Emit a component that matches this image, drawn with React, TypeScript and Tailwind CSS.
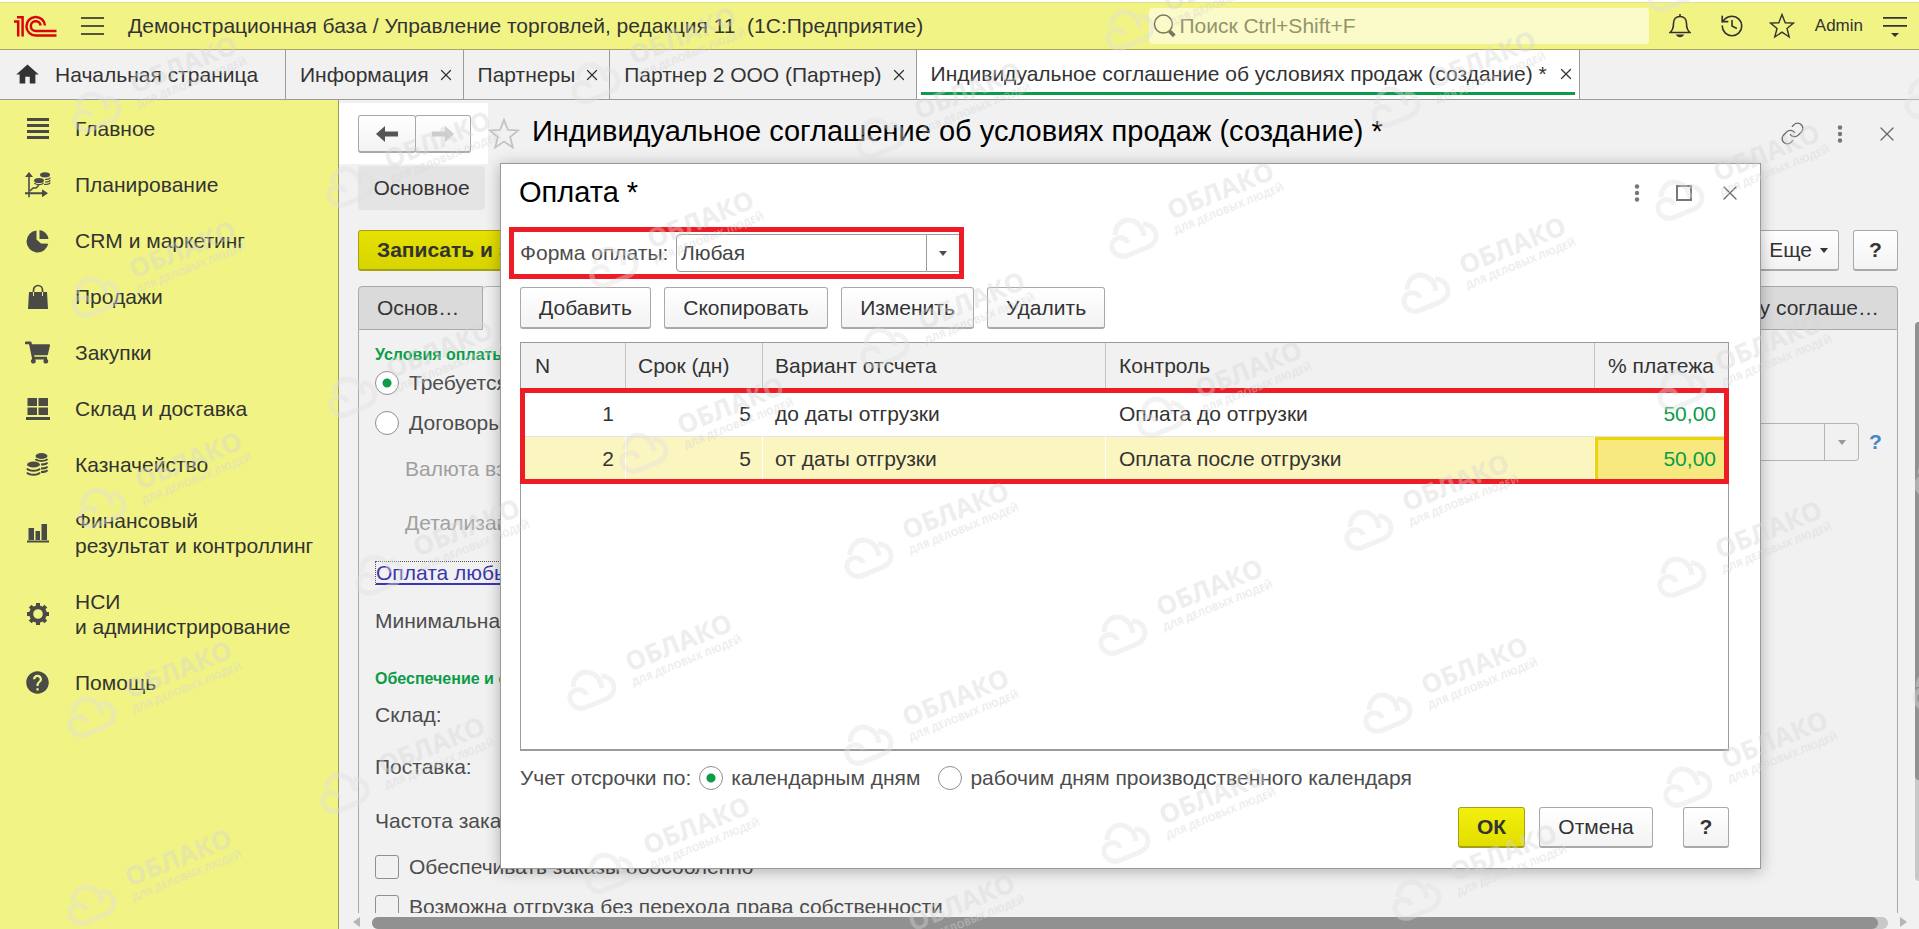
import React from 'react';
import { History, Link, X } from 'lucide-react';
import { FaShoppingCart } from 'react-icons/fa';
import { MdHelp, MdHome } from 'react-icons/md';

const sections = [
  { title: ['Главное'], icon: <MainIcon /> },
  { title: ['Планирование'], icon: <PlanIcon /> },
  { title: ['CRM и маркетинг'], icon: <PieIcon /> },
  { title: ['Продажи'], icon: <BagIcon /> },
  { title: ['Закупки'], icon: <FaShoppingCart size={25} /> },
  { title: ['Склад и доставка'], icon: <StoreIcon /> },
  { title: ['Казначейство'], icon: <CoinsIcon /> },
  { title: ['Финансовый', 'результат и контроллинг'], icon: <ChartIcon /> },
  { title: ['НСИ', 'и администрирование'], icon: <GearIcon /> },
  { title: ['Помощь'], icon: <MdHelp size={27} /> },
];

const tabs = ['Информация', 'Партнеры', 'Партнер 2 ООО (Партнер)'];

const rows = [
  { n: 1, days: 5, variant: 'до даты отгрузки', control: 'Оплата до отгрузки', percent: '50,00' },
  { n: 2, days: 5, variant: 'от даты отгрузки', control: 'Оплата после отгрузки', percent: '50,00' },
];

// centers of the cloud sign of each mark
const marks = [
  [97, 112], [96, 297], [351, 187], [596, 83], [614, 267], [1130, 30], [881, 138], [1134, 238],
  [885, 348], [1396, 107], [1929, 98], [1680, 200], [1426, 293], [1672, -9], [1682, 390], [1369, 530],
  [1682, 577], [1939, 477], [353, 397], [102, 508], [380, 575], [644, 453], [1162, 417], [869, 558],
  [1123, 635], [92, 717], [92, 905], [345, 793], [592, 690], [610, 873], [869, 745], [1126, 843],
  [875, 950], [1388, 713], [1688, 787], [1417, 900], [1937, 690],
];

const button = 'rounded-[3px] border border-[#a9a9a9] border-b-2 bg-linear-to-b from-white to-[#f3f3f3] text-[#333]';
const radio = 'size-6 shrink-0 appearance-none rounded-full border border-[#8f8f8f] bg-white checked:bg-[radial-gradient(circle,#0a9c48_4px,transparent_5px)]';
const checkbox = 'size-6 shrink-0 appearance-none rounded-[3px] border border-[#8f8f8f]';

function MainIcon() {
  return (
    <svg width="24" height="24" viewBox="0 0 24 24" fill="currentColor">
      <path d="M1 1h22v3H1zM1 7h22v3H1zM1 13h22v3H1zM1 19h22v3H1z" />
    </svg>
  );
}

function PlanIcon() {
  return (
    <svg width="26" height="26" viewBox="0 0 26 26" fill="currentColor">
      <path d="M0 5l4-5 4 5H4.800v15.200H17v-3l6 4-6 4v-3H4.800v3H3.200v-3H0v-2h3.200V5z" />
      <path d="M5 19l3-3h3l3-3" fill="none" stroke="currentColor" strokeWidth="1.500" />
      <ellipse cx="20" cy="2.800" rx="5" ry="2.600" />
      <ellipse cx="14" cy="8.500" rx="5" ry="2.600" />
      <path d="M20 7.500c3 0 5-1 5-2M20 10c3 0 5-1 5-2M19 12.500c4 0 6-1 6-2M9.500 11c1 2 8 2 9 0" fill="none" stroke="currentColor" strokeWidth="1.200" />
    </svg>
  );
}

function PieIcon() {
  return (
    <svg width="24" height="24" viewBox="0 0 24 24" fill="currentColor">
      <path d="M10.500 1.500a11 11 0 1 0 11.800 13.300L15 14.500l-4.500-4z" />
      <path d="M13.500 1v9h9A10 10 0 0 0 13.500 1z" />
    </svg>
  );
}

function BagIcon() {
  return (
    <svg width="24" height="26" viewBox="0 0 24 26">
      <path d="M3 8h18l1 17H2z" fill="currentColor" />
      <path d="M7.500 12V6a4.500 4.500 0 0 1 9 0v6" fill="none" stroke="currentColor" strokeWidth="1.700" />
      <path d="M7.500 8v4M16.500 8v4" stroke="#f1f484" strokeWidth="1" />
    </svg>
  );
}

function StoreIcon() {
  return (
    <svg width="24" height="24" viewBox="0 0 24 24" fill="currentColor">
      <path d="M1.500 1H11v8H1.500zM12.500 1H22v8h-9.500zM1.500 10.500H11V18H1.500zM12.500 10.500H22V18h-9.500zM0 20h24v3H0z" />
    </svg>
  );
}

function CoinsIcon() {
  return (
    <svg width="24" height="26" viewBox="0 0 24 26" fill="currentColor">
      <ellipse cx="15.500" cy="4" rx="6" ry="3" />
      <ellipse cx="7.500" cy="12.500" rx="6.500" ry="3" />
      <path d="M9.500 7c2 2.500 10 2.500 12 0M15 12.500c3 0 6-1 6.500-2M15 16.500c3 0 6-1 6.500-2M15 20c3 0 6-1 6.500-2M1 16.500c2 3 11 3 13 0M1 20.500c2 3 11 3 13 0" fill="none" stroke="currentColor" strokeWidth="2" />
    </svg>
  );
}

function ChartIcon() {
  return (
    <svg width="24" height="20" viewBox="0 0 24 20" fill="currentColor">
      <path d="M2.500 5H8v12H2.500zM9.500 8H14v9H9.500zM15.500 1H21v16h-5.500zM1 17.500h22v2H1z" />
    </svg>
  );
}

function GearIcon() {
  return (
    <svg width="24" height="24" viewBox="0 0 24 24" fill="none" stroke="currentColor">
      <circle cx="12" cy="12" r="6.800" strokeWidth="4" />
      <path d="M12 1v3M12 20v3M1 12h3M20 12h3M4.200 4.200l2.200 2.200M17.600 17.600l2.200 2.200M4.200 19.800l2.200-2.200M17.600 6.400l2.200-2.200" strokeWidth="4" />
    </svg>
  );
}

function Logo() {
  return (
    <svg width="43" height="23" viewBox="0 0 43 23" fill="none" stroke="#d8060c" strokeWidth="2.500">
      <path d="M0 6.500h4.200v15M3 2.200h5.600v19.300" />
      <path d="M31 10.500a9.300 9.300 0 1 0-9.300 10H42.500" />
      <path d="M26.600 10.500a4.900 4.900 0 1 0-4.900 5.500H42.500" />
    </svg>
  );
}

function StarIcon({ size, className = '' }: { size: number; className?: string }) {
  return (
    <svg className={className} width={size} height={size} viewBox="0 0 26 26" fill="none" stroke="currentColor" strokeWidth="1.400">
      <path d="M13 1.500l3.200 8.200 8.300.4-6.500 5.400 2.200 8.500-7.200-4.800L5.800 24 8 15.500l-6.500-5.400 8.300-.4z" />
    </svg>
  );
}

function Dots() {
  return (
    <svg width="6" height="18" viewBox="0 0 6 18" fill="#777">
      <circle cx="3" cy="2.500" r="2.200" />
      <circle cx="3" cy="9" r="2.200" />
      <circle cx="3" cy="15.500" r="2.200" />
    </svg>
  );
}

function Caret() {
  return (
    <svg width="8" height="5" viewBox="0 0 8 5" fill="currentColor">
      <path d="M0 0h8L4 5z" />
    </svg>
  );
}

function NavArrow({ className = '' }: { className?: string }) {
  return (
    <svg className={className} width="22" height="18" viewBox="0 0 22 18" fill="currentColor">
      <path d="M0 9l9-8v5.500h13v5H9V17z" />
    </svg>
  );
}

function Header() {
  return (
    <header className="mt-0.5 flex h-12 shrink-0 items-center border-y border-[#a8a85c] border-t-[#dfe08a] bg-[#f1f484] pr-3 pl-3.5">
      <Logo />
      <button aria-label="Меню" className="ml-6 flex w-[23px] flex-col gap-1.5">
        <span className="h-0.5 bg-[#55553c]" />
        <span className="h-0.5 bg-[#55553c]" />
        <span className="h-0.5 bg-[#55553c]" />
      </button>
      <span className="ml-6 whitespace-pre">Демонстрационная база / Управление торговлей, редакция 11  (1С:Предприятие)</span>
      <label className="mr-5 ml-auto flex h-9 w-[500px] items-center rounded bg-[#fafbc9] pl-1">
        <svg width="26" height="26" viewBox="0 0 26 26" fill="none" stroke="#77775c">
          <circle cx="11" cy="11" r="9.500" strokeWidth="1.600" />
          <path d="M17.500 18.500l5 5" strokeWidth="4" />
        </svg>
        <input aria-label="Поиск" placeholder="Поиск Ctrl+Shift+F" className="ml-0.5 w-full bg-transparent outline-none placeholder:text-[#94946c]" />
      </label>
      <div className="flex items-center">
        <button aria-label="Уведомления" className="w-[22px]">
          <svg width="22" height="24" viewBox="0 0 22 24" fill="none" stroke="#333" strokeWidth="1.600">
            <path d="M1 18.500h20c-2.500-2-3.500-4-3.500-9C17.500 5 15 2.500 11 2.500S4.500 5 4.500 9.500c0 5-1 7-3.500 9zM11 0v2.500" />
            <path d="M7 20.500h8c-1 3.500-7 3.500-8 0z" fill="#333" stroke="none" />
          </svg>
        </button>
        <button aria-label="История" className="ml-7"><History size={26} strokeWidth={1.500} /></button>
        <button aria-label="Избранное" className="ml-6"><StarIcon size={26} /></button>
        <span className="ml-5 text-[17px]">Admin</span>
        <button aria-label="Сервис" className="ml-5 pt-0.5">
          <svg width="24" height="22" viewBox="0 0 24 22" fill="#333">
            <path d="M0 1h24v1.800H0zM0 9h24v1.800H0zM8 17h8l-4 4z" />
          </svg>
        </button>
      </div>
    </header>
  );
}

function TabBar() {
  return (
    <nav className="flex h-[50px] shrink-0 border-b border-[#9b9b9b] bg-[#f1f1f1]">
      <a href="#home" className="flex w-[286px] items-center gap-3.5 border-r border-[#9b9b9b] pl-3.5">
        <MdHome size={27} />
        Начальная страница
      </a>
      {tabs.map((tab) => (
        <div key={tab} className="flex items-center border-r border-[#9b9b9b] pr-2 pl-3.5">
          <a href="#tab" className="whitespace-nowrap">{tab}</a>
          <button aria-label="Закрыть вкладку" className="ml-2"><X size={18} strokeWidth={1.700} /></button>
        </div>
      ))}
      <div className="flex border-r border-[#9b9b9b] bg-white px-1">
        <div className="mb-1 flex items-center border-b-3 border-[#0a9c48] pt-1.5 pl-2.5">
          <a href="#tab" className="whitespace-nowrap">Индивидуальное соглашение об условиях продаж (создание) *</a>
          <button aria-label="Закрыть вкладку" className="ml-2.5"><X size={18} strokeWidth={1.700} /></button>
        </div>
      </div>
    </nav>
  );
}

function Sidebar() {
  return (
    <aside className="w-[339px] shrink-0 border-r border-[#9c9c55] bg-[#f1f484] leading-[25px]">
      {sections.map((s) => (
        <a key={s.title[0]} href="#section" className="flex items-center pt-4 pb-[15px]">
          <span className="flex h-6 w-[75px] shrink-0 items-center justify-center text-[#4a4a46]">{s.icon}</span>
          <span>{s.title.map((line) => <span key={line} className="block whitespace-nowrap">{line}</span>)}</span>
        </a>
      ))}
    </aside>
  );
}

function Row({ className = '', children }: { className?: string; children: React.ReactNode }) {
  return <div className={`flex h-[30px] items-center whitespace-nowrap ${className}`}>{children}</div>;
}

function AgreementForm() {
  return (
    <div className="flex min-h-0 flex-1">
      <div className="flex min-w-0 flex-1 flex-col">
        <div className="flex h-11 shrink-0 pr-[17px] pl-[19px]">
          <button className="w-[125px] rounded-tl border border-[#a9a9a9] bg-[#dadada] pl-4.5 text-left">Основ…</button>
          <button className="flex-1 rounded-t border-t border-[#b5b5b5]" aria-label="Условия" />
          <button className="w-1/3 rounded-tr border border-[#a9a9a9] bg-[#dadada] pr-4.5 text-right">у соглаше…</button>
        </div>
        <div className="mr-[17px] ml-[19px] flex min-h-0 flex-1 overflow-hidden border-x border-[#a9a9a9] pl-4 text-[#4d4d4d]">
          <div>
            <Row className="mt-2.5 text-[16px] font-bold text-[#0a9c48]">Условия оплаты</Row>
            <Row className="-mt-0.5"><label className="flex items-center gap-2.5"><input type="radio" name="terms" defaultChecked className={radio} />Требуется</label></Row>
            <Row className="mt-2.5"><label className="flex items-center gap-2.5"><input type="radio" name="terms" className={radio} />Договоры</label></Row>
            <Row className="mt-4 pl-[30px] text-[#9f9f9f]">Валюта взаиморасчетов:</Row>
            <Row className="mt-6 pl-[30px] text-[#9f9f9f]">Детализация:</Row>
            <Row className="mt-5"><a href="#payment" className="border border-dotted border-[#555] leading-[22px] text-[#3c36ac] underline underline-offset-3">Оплата любым способом</a></Row>
            <Row className="mt-4.5">Минимальная сумма:</Row>
            <Row className="mt-7 text-[16px] font-bold text-[#0a9c48]">Обеспечение и отгрузка</Row>
            <Row className="mt-1.5">Склад:</Row>
            <Row className="mt-[22px]">Поставка:</Row>
            <Row className="mt-6">Частота заказа:</Row>
            <Row className="mt-4"><label className="flex items-center gap-2.5"><input type="checkbox" className={checkbox} />Обеспечивать заказы обособленно</label></Row>
            <Row className="mt-2.5"><label className="flex items-center gap-2.5"><input type="checkbox" className={checkbox} />Возможна отгрузка без перехода права собственности</label></Row>
          </div>
          <div className="mt-[93px] mr-4 ml-auto flex h-[38px] items-center">
            <input aria-label="Валюта" disabled className="h-full w-[200px] border border-[#b5b5b5]" />
            <button aria-label="Выбрать" className="flex h-full w-[34px] items-center justify-center rounded-r border border-l-0 border-[#b5b5b5] text-[#999]"><Caret /></button>
            <button className="ml-2.5 w-3 font-bold text-[#4a86c4]">?</button>
          </div>
        </div>
        <div className="flex h-4 shrink-0 items-end gap-3 pl-3.5">
          <svg className="mb-0.5" width="7" height="10" viewBox="0 0 7 10" fill="#b5b5b5"><path d="M7 0v10L0 5z" /></svg>
          <div className="h-3 flex-1 rounded-full bg-[#c8c8c8] pr-2.5"><div className="h-full rounded-full bg-[#919191]" /></div>
          <svg className="mr-2 mb-0.5" width="7" height="10" viewBox="0 0 7 10" fill="#b5b5b5"><path d="M0 0v10l7-5z" /></svg>
        </div>
      </div>
      <div className="mt-9 mb-12 w-1 rounded-l-sm bg-[#c8c8c8] pb-[101px]">
        <div className="h-full rounded-l-sm bg-[#919191]" />
      </div>
    </div>
  );
}

function PaymentDialog() {
  return (
    <section role="dialog" aria-label="Оплата" className="absolute top-[63px] right-[158px] bottom-[60px] left-[161px] flex flex-col border border-[#999] bg-white shadow-[0_2px_14px_rgba(0,0,0,0.28)]">
      <div className="flex h-[58px] shrink-0 items-center pr-4.5 pl-4.5 text-[#666]">
        <h2 className="text-[29px] text-black">Оплата *</h2>
        <button aria-label="Еще" className="ml-auto"><Dots /></button>
        <button aria-label="Развернуть" className="ml-9 size-4 border-2 border-[#777]" />
        <button aria-label="Закрыть" className="ml-6.5"><X size={24} strokeWidth={1.300} /></button>
      </div>

      <div className="mt-[5px] ml-2 flex h-[52px] w-[455px] shrink-0 items-center border-5 border-[#ee1c25] pl-1.5 text-[#4d4d4d]">
        <label htmlFor="form" className="w-[156px] whitespace-nowrap">Форма оплаты:</label>
        <select id="form" className="h-[38px] w-[251px] appearance-none rounded-l border border-[#9b9b9b] px-1 text-[#444]">
          <option>Любая</option>
        </select>
        <button aria-label="Выбрать" className="flex h-[38px] flex-1 items-center justify-center border-y border-[#9b9b9b]"><Caret /></button>
      </div>

      <div className="mt-2 ml-[19px] flex h-[42px] shrink-0 gap-[13px]">
        <button className={`${button} w-[131px]`}>Добавить</button>
        <button className={`${button} w-[164px]`}>Скопировать</button>
        <button className={`${button} w-[133px]`}>Изменить</button>
        <button className={`${button} w-[118px]`}>Удалить</button>
      </div>

      <div className="relative mt-[13px] mr-[31px] ml-[19px] min-h-0 flex-1 border border-b-2 border-[#9b9b9b]">
        <table className="w-full table-fixed border-separate border-spacing-0">
          <thead className="bg-[#f1f1f1]">
            <tr className="h-[49px] text-left [&>th]:pb-1 [&>th]:font-normal">
              <th className="w-[105px] border-r border-[#c4c4c4] pl-3.5">N</th>
              <th className="w-[137px] border-r border-[#c4c4c4] pl-3">Срок (дн)</th>
              <th className="w-[343px] border-r border-[#c4c4c4] pl-3">Вариант отсчета</th>
              <th className="border-r border-[#c4c4c4] pl-[13px]">Контроль</th>
              <th className="w-[133px] pl-[13px] whitespace-nowrap">% платежа</th>
            </tr>
          </thead>
          <tbody>
            {rows.map((row) => (
              <tr key={row.n} className="h-[45px] even:bg-[#fbf5bf] [&>td]:border-r [&>td]:border-white [&>td]:border-b [&>td]:border-b-[#e2e2e2]">
                <td className="pr-[11px] text-right">{row.n}</td>
                <td className="pr-[11px] text-right">{row.days}</td>
                <td className="pl-3">{row.variant}</td>
                <td className="pl-[13px]">{row.control}</td>
                <td className={row.n === 2 ? 'bg-[#f7e980] pr-[11px] text-right text-[#0a9c48] outline-3 -outline-offset-3 outline-[#f0d400]' : 'pr-[11px] text-right text-[#0a9c48]'}>{row.percent}</td>
              </tr>
            ))}
          </tbody>
        </table>
        <div className="pointer-events-none absolute -inset-x-px top-[45px] h-24 border-5 border-[#ee1c25]" />
      </div>

      <div className="mt-3 ml-[19px] flex h-[30px] shrink-0 items-center text-[#4d4d4d]">
        <span>Учет отсрочки по:</span>
        <label className="ml-2 flex items-center gap-2"><input type="radio" name="days" defaultChecked className={radio} />календарным дням</label>
        <label className="ml-[18px] flex items-center gap-2"><input type="radio" name="days" className={radio} />рабочим дням производственного календаря</label>
      </div>

      <div className="mt-3.5 mr-[31px] mb-5 flex h-[41px] shrink-0 justify-end">
        <button className="w-[67px] rounded-[3px] border border-b-2 border-[#a3a016] bg-linear-to-b from-[#f3f00c] to-[#e2de00] font-bold">ОК</button>
        <button className={`${button} ml-3.5 w-[114px]`}>Отмена</button>
        <button className={`${button} ml-[30px] w-[46px] font-bold`}>?</button>
      </div>
    </section>
  );
}

function Mark({ x, y }: { x: number; y: number }) {
  return (
    <g transform={`translate(${x} ${y})`}>
      <g fill="none" stroke="#e0e0e0" strokeWidth="5">
        <path d="M-19-3c1-20 26-20 29 1" />
        <path d="M9-14c13 0 19 16 5 23l-22 9c-13 3-20-14-8-18 5-1 9 1 10 5" />
      </g>
      <g fill="#d6d6d6" textAnchor="middle">
        <text transform="translate(90 -39) rotate(-22)" fontSize="26" fontWeight="700">ОБЛАКО</text>
        <text transform="translate(96 -26) rotate(-22)" fontSize="10" fontWeight="700">ДЛЯ ДЕЛОВЫХ ЛЮДЕЙ</text>
      </g>
    </g>
  );
}

export default function App() {
  return (
    <div className="relative flex h-screen flex-col overflow-hidden bg-white font-['Liberation_Sans',Arial,sans-serif] text-[21px] text-[#333]">
      <Header />
      <TabBar />
      <div className="flex min-h-0 flex-1">
        <Sidebar />
        <main className="relative flex min-w-0 flex-1 flex-col bg-[#f1f1f1]">
          <div className="mt-[3px] flex h-[61px] shrink-0 items-center">
            <div className="flex h-full w-[149px] items-start bg-white pt-3 pl-[19px]">
              <button aria-label="Назад" className={`${button} flex h-[38px] w-[58px] items-center justify-center text-[#555]`}><NavArrow /></button>
              <button aria-label="Вперед" className={`${button} -ml-px flex h-[38px] w-[56px] items-center justify-center`}><NavArrow className="rotate-180 text-[#ccc]" /></button>
            </div>
            <StarIcon size={32} className="text-[#c2c2c2]" />
            <h1 className="ml-3 pb-1 text-[29px] whitespace-nowrap text-black">Индивидуальное соглашение об условиях продаж (создание) *</h1>
            <div className="mr-5 ml-auto flex items-center text-[#666]">
              <button aria-label="Ссылка"><Link size={25} strokeWidth={1.300} /></button>
              <button aria-label="Еще" className="ml-8"><Dots /></button>
              <button aria-label="Закрыть" className="ml-8"><X size={24} strokeWidth={1.300} /></button>
            </div>
          </div>
          <button className="mt-0.5 ml-[19px] h-11 w-[127px] shrink-0 rounded bg-[#e4e4e4]">Основное</button>
          <div className="mt-5 mb-[15px] flex h-[41px] shrink-0 pr-[21px] pl-[19px]">
            <button className="w-[250px] rounded-[3px] border border-b-2 border-[#a3a016] bg-linear-to-b from-[#e6e200] to-[#d8d400] pl-4.5 text-left font-bold">Записать и закрыть</button>
            <button className={`${button} ml-auto flex w-[100px] items-center justify-end gap-2 pr-2.5`}>Еще<Caret /></button>
            <button className={`${button} ml-3.5 w-[45px] font-bold`}>?</button>
          </div>
          <AgreementForm />
          <PaymentDialog />
        </main>
      </div>
      <svg aria-hidden="true" className="pointer-events-none absolute inset-0 size-full font-['Open_Sans',sans-serif] opacity-40">
        {marks.map(([x, y]) => <Mark key={`${x}-${y}`} x={x} y={y} />)}
      </svg>
    </div>
  );
}
